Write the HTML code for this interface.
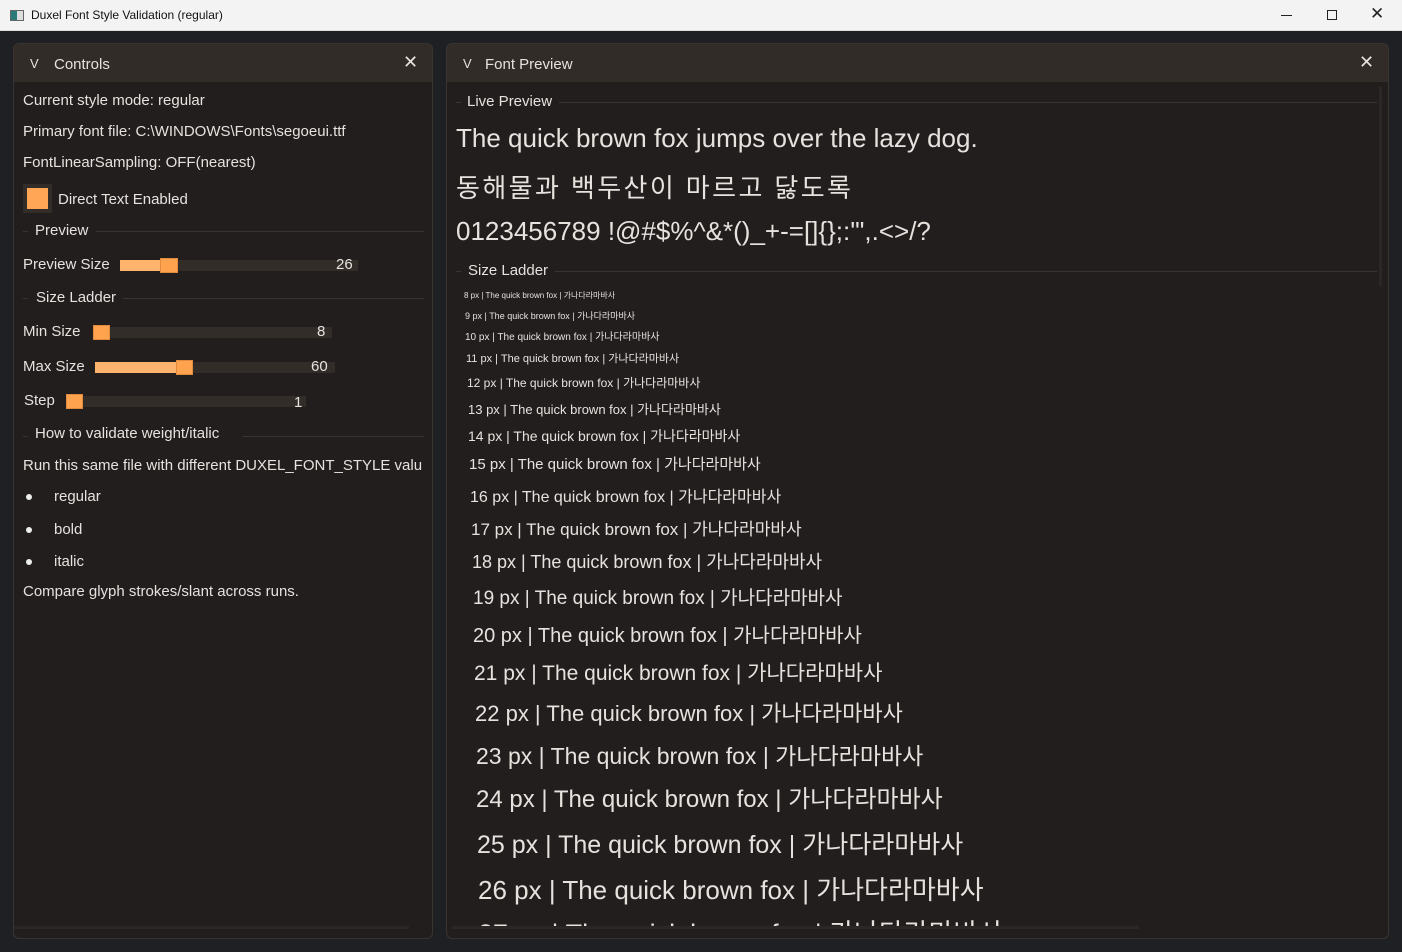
<!DOCTYPE html>
<html><head><meta charset="utf-8"><style>
*{margin:0;padding:0;box-sizing:border-box}
body{width:1402px;height:952px;background:#1f2023;position:relative;overflow:hidden;font-family:"Liberation Sans","Noto Sans CJK KR",sans-serif;color:#e6e2de}
.a{position:absolute;white-space:nowrap}
.t{font-size:15px;line-height:18px}
.panel{position:absolute;background:#221e1e;border:1px solid #3a3431;border-radius:6px;overflow:hidden}
.hdr{position:absolute;left:0;right:0;top:0;height:38px;background:#322c29}
.sep{position:absolute;height:1px;background:#3a3431}
.track{position:absolute;height:11px;background:#332d2a}
.fill{position:absolute;height:11px;background:#ffb46e}
.knob{position:absolute;height:15px;background:#ffa34f;border:1px solid #e08b3e}
.dot{position:absolute;width:6px;height:6px;border-radius:50%;background:#eee}
</style></head><body>
<div class="a" style="left:0;top:0;width:1402px;height:31px;background:#f3f3f3;border-bottom:1px solid #ddd"></div>
<div class="a" style="left:10px;top:10px;width:14px;height:11px;border:1px solid #666;background:linear-gradient(90deg,#2a7a7a 50%,#ddd 50%)"></div>
<div class="a" style="left:31px;top:8px;font-size:12px;color:#111">Duxel Font Style Validation (regular)</div>
<div class="a" style="left:1281px;top:15px;width:11px;height:1px;background:#222"></div>
<div class="a" style="left:1327px;top:10px;width:10px;height:10px;border:1px solid #222"></div>
<div class="a" style="left:1370px;top:4px;font-size:17px;color:#222">✕</div>

<div class="panel" style="left:13px;top:43px;width:420px;height:896px">
<div class="hdr"></div>
<div class="a" style="left:16px;top:12px;font-size:13px">V</div>
<div class="a t" style="left:40px;top:12px">Controls</div>
<div class="a" style="left:389px;top:8px;font-size:18px">✕</div>
<div class="a t" style="left:9px;top:48px">Current style mode: regular</div>
<div class="a t" style="left:9px;top:79px">Primary font file: C:\WINDOWS\Fonts\segoeui.ttf</div>
<div class="a t" style="left:9px;top:110px">FontLinearSampling: OFF(nearest)</div>
<div class="a" style="left:9px;top:140px;width:29px;height:29px;background:#332d2a"></div>
<div class="a" style="left:13px;top:144px;width:21px;height:21px;background:#ffa556"></div>
<div class="a t" style="left:44px;top:147px">Direct Text Enabled</div>
<div class="sep" style="left:9px;width:5px;top:187px"></div><div class="a t" style="left:21px;top:178px">Preview</div><div class="sep" style="left:82px;width:328px;top:187px"></div>
<div class="a t" style="left:9px;top:212px">Preview Size</div>
<div class="track" style="left:106px;top:216px;width:238px"></div><div class="fill" style="left:106px;top:216px;width:56px"></div><div class="knob" style="left:146px;top:214px;width:18px"></div>
<div class="a t" style="left:322px;top:212px">26</div>
<div class="sep" style="left:9px;width:5px;top:254px"></div><div class="a t" style="left:22px;top:245px">Size Ladder</div><div class="sep" style="left:109px;width:301px;top:254px"></div>
<div class="a t" style="left:9px;top:279px">Min Size</div>
<div class="track" style="left:79px;top:283px;width:239px"></div><div class="knob" style="left:79px;top:281px;width:17px"></div>
<div class="a t" style="left:303px;top:279px">8</div>
<div class="a t" style="left:9px;top:314px">Max Size</div>
<div class="track" style="left:81px;top:318px;width:240px"></div><div class="fill" style="left:81px;top:318px;width:85px"></div><div class="knob" style="left:162px;top:316px;width:17px"></div>
<div class="a t" style="left:297px;top:314px">60</div>
<div class="a t" style="left:10px;top:348px">Step</div>
<div class="track" style="left:52px;top:352px;width:240px"></div><div class="knob" style="left:52px;top:350px;width:17px"></div>
<div class="a t" style="left:280px;top:350px">1</div>
<div class="sep" style="left:9px;width:5px;top:392px"></div><div class="a t" style="left:21px;top:381px">How to validate weight/italic</div><div class="sep" style="left:229px;width:181px;top:392px"></div>
<div class="a t" style="left:9px;top:413px;width:402px;overflow:hidden">Run this same file with different DUXEL_FONT_STYLE valu</div>
<div class="dot" style="left:12px;top:450px"></div><div class="a t" style="left:40px;top:444px">regular</div>
<div class="dot" style="left:12px;top:483px"></div><div class="a t" style="left:40px;top:477px">bold</div>
<div class="dot" style="left:12px;top:515px"></div><div class="a t" style="left:40px;top:509px">italic</div>
<div class="a t" style="left:9px;top:539px">Compare glyph strokes/slant across runs.</div>
<div class="a" style="left:0;top:882px;width:395px;height:3px;background:#2c2725"></div>
</div>

<div class="panel" style="left:446px;top:43px;width:943px;height:896px">
<div class="hdr"></div>
<div class="a" style="left:16px;top:12px;font-size:13px">V</div>
<div class="a t" style="left:38px;top:12px">Font Preview</div>
<div class="a" style="left:912px;top:8px;font-size:18px">✕</div>
<div class="a" style="left:932px;top:42px;width:3px;height:200px;background:#2c2725"></div>
<div class="sep" style="left:9px;width:5px;top:58px"></div><div class="a t" style="left:20px;top:49px">Live Preview</div><div class="sep" style="left:112px;width:818px;top:58px"></div>
<div class="a" style="left:9px;top:79px;font-size:26px">The quick brown fox jumps over the lazy dog.</div>
<div class="a" style="left:9px;top:124px;font-size:26px;letter-spacing:2.4px">동해물과 백두산이 마르고 닳도록</div>
<div class="a" style="left:9px;top:172px;font-size:26px">0123456789 !@#$%^&amp;*()_+-=[]{};:'",.&lt;&gt;/?</div>
<div class="sep" style="left:9px;width:5px;top:227px"></div><div class="a t" style="left:21px;top:218px">Size Ladder</div><div class="sep" style="left:108px;width:822px;top:227px"></div>
<div class="a" style="left:17px;top:246px;font-size:8px">8 px | The quick brown fox | 가나다라마바사</div>
<div class="a" style="left:18px;top:265px;font-size:9px">9 px | The quick brown fox | 가나다라마바사</div>
<div class="a" style="left:18px;top:284px;font-size:10px">10 px | The quick brown fox | 가나다라마바사</div>
<div class="a" style="left:19px;top:306px;font-size:11px">11 px | The quick brown fox | 가나다라마바사</div>
<div class="a" style="left:20px;top:330px;font-size:12px">12 px | The quick brown fox | 가나다라마바사</div>
<div class="a" style="left:21px;top:355px;font-size:13px">13 px | The quick brown fox | 가나다라마바사</div>
<div class="a" style="left:21px;top:382px;font-size:14px">14 px | The quick brown fox | 가나다라마바사</div>
<div class="a" style="left:22px;top:409px;font-size:15px">15 px | The quick brown fox | 가나다라마바사</div>
<div class="a" style="left:23px;top:439px;font-size:16px">16 px | The quick brown fox | 가나다라마바사</div>
<div class="a" style="left:24px;top:471px;font-size:17px">17 px | The quick brown fox | 가나다라마바사</div>
<div class="a" style="left:25px;top:504px;font-size:18px">18 px | The quick brown fox | 가나다라마바사</div>
<div class="a" style="left:26px;top:539px;font-size:19px">19 px | The quick brown fox | 가나다라마바사</div>
<div class="a" style="left:26px;top:575px;font-size:20px">20 px | The quick brown fox | 가나다라마바사</div>
<div class="a" style="left:27px;top:613px;font-size:21px">21 px | The quick brown fox | 가나다라마바사</div>
<div class="a" style="left:28px;top:652px;font-size:22px">22 px | The quick brown fox | 가나다라마바사</div>
<div class="a" style="left:29px;top:693px;font-size:23px">23 px | The quick brown fox | 가나다라마바사</div>
<div class="a" style="left:29px;top:735px;font-size:24px">24 px | The quick brown fox | 가나다라마바사</div>
<div class="a" style="left:30px;top:781px;font-size:25px">25 px | The quick brown fox | 가나다라마바사</div>
<div class="a" style="left:31px;top:826px;font-size:26px">26 px | The quick brown fox | 가나다라마바사</div>
<div class="a" style="left:31px;top:875px;font-size:27px;height:9px;overflow:hidden;line-height:30px">27 px | The quick brown fox | 가나다라마바사</div>
<div class="a" style="left:5px;top:882px;width:687px;height:3px;background:#2c2725"></div>
</div>
</body></html>
